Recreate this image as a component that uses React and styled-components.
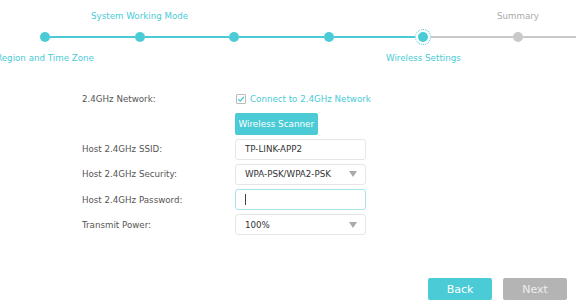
import React from 'react'
import styled, { createGlobalStyle } from 'styled-components'

const teal = '#4acbd6'
const grey = '#c9c9c9'

const Global = createGlobalStyle`
    html, body{
        margin: 0;
        padding: 0;
        background: #fff;
    }
    body{
        font-family: "DejaVu Sans", Verdana, sans-serif;
        font-size: 8.7px;
        color: #555;
    }
`

const Page = styled.div`
    width: 576px;
    height: 304px;
    overflow: hidden;
    background: #fff;
`

const Stepper = styled.div`
    padding-top: 9px;
    margin-left: -2.3px;
`

const StepRow = styled.div`
    display: grid;
    grid-template-columns: repeat(7, 94.6px);
    height: ${p => p.$h}px;
    align-items: center;
`

const StepLabel = styled.div`
    margin: 0 -33px;
    text-align: center;
    white-space: nowrap;
    font-size: 8.7px;
    color: ${p => p.$done ? teal : '#aaa'};
`

const Node = styled.div`
    display: flex;
    align-items: center;
`

const Line = styled.div`
    flex: 1;
    height: 2px;
    background: ${p => p.$hidden ? 'transparent' : p.$done ? teal : grey};
`

const Dot = styled.div`
    flex: none;
    width: 10px;
    height: 10px;
    border-radius: 50%;
    background: ${p => p.$done ? teal : grey};
    margin: ${p => p.$active ? '0 3px' : '0'};
    outline: ${p => p.$active ? `1px dotted ${teal}` : 'none'};
    outline-offset: 2px;
`

const Form = styled.div`
    margin: 24px 0 0 82px;
    display: grid;
    grid-template-columns: 153px 131px;
    grid-auto-rows: 21px;
    row-gap: 4.25px;
    align-items: center;
`

const Label = styled.div`
    color: #555;
    font-size: 8.7px;
`

const Check = styled.label`
    display: flex;
    align-items: center;
    gap: 4px;
    margin-left: 1px;
    color: ${teal};
    white-space: nowrap;
`

const Box = styled.span`
    width: 8px;
    height: 8px;
    border: 1px solid #bbb;
    border-radius: 1px;
    display: flex;
    align-items: center;
    justify-content: center;
`

const ScanButton = styled.button`
    justify-self: start;
    height: 22px;
    padding: 0 3.5px;
    border: none;
    border-radius: 2px;
    background: ${teal};
    color: #fff;
    font-family: inherit;
    font-size: 8.8px;
`

const Field = styled.div`
    height: 21px;
    box-sizing: border-box;
    border: 1px solid ${p => p.$focus ? '#a6e4ea' : '#e6e6e6'};
    border-radius: 3px;
    display: flex;
    align-items: center;
    padding: 0 9px;
    color: #333;
    font-size: 8.7px;
`

const Value = styled.span`
    flex: 1;
`

const Arrow = styled.span`
    width: 0;
    height: 0;
    border-left: 4px solid transparent;
    border-right: 4px solid transparent;
    border-top: 6px solid #aaa;
    margin-right: -1px;
`

const Caret = styled.span`
    width: 1px;
    height: 11px;
    background: #444;
`

const Footer = styled.div`
    display: flex;
    justify-content: flex-end;
    gap: 11px;
    margin-top: 43px;
    padding-right: 9px;
`

const NavButton = styled.button`
    width: 64px;
    height: 22px;
    border: none;
    border-radius: 2px;
    background: ${p => p.$primary ? teal : '#b4b4b4'};
    color: ${p => p.$primary ? '#fff' : '#eee'};
    font-family: inherit;
    font-size: 11px;
`

const steps = [
    { label: 'Region and Time Zone', pos: 'bottom' },
    { label: 'System Working Mode', pos: 'top' },
    { label: '', pos: 'bottom' },
    { label: '', pos: 'top' },
    { label: 'Wireless Settings', pos: 'bottom' },
    { label: 'Summary', pos: 'top' },
    { label: '', pos: 'bottom' },
]
const active = 4

function Stepbar() {
    return (
        <Stepper>
            <StepRow $h={14}>
                {steps.map((s, i) => (
                    <StepLabel key={i} $done={i <= active}>{s.pos === 'top' ? s.label : ''}</StepLabel>
                ))}
            </StepRow>
            <StepRow $h={28}>
                {steps.map((s, i) => (
                    <Node key={i}>
                        <Line $hidden={i === 0} $done={i <= active} />
                        <Dot $done={i <= active} $active={i === active} />
                        <Line $done={i < active} />
                    </Node>
                ))}
            </StepRow>
            <StepRow $h={13}>
                {steps.map((s, i) => (
                    <StepLabel key={i} $done={i <= active}>{s.pos === 'bottom' ? s.label : ''}</StepLabel>
                ))}
            </StepRow>
        </Stepper>
    )
}

export default function App() {
    return (
        <Page>
            <Global />
            <Stepbar />
            <Form>
                <Label>2.4GHz Network:</Label>
                <Check>
                    <Box>
                        <svg width="8" height="8" viewBox="0 0 8 8">
                            <path d="M1.2 4.2 L3.2 6 L6.8 1.8" fill="none" stroke={teal} strokeWidth="1.3" />
                        </svg>
                    </Box>
                    Connect to 2.4GHz Network
                </Check>
                <div />
                <ScanButton>Wireless Scanner</ScanButton>
                <Label>Host 2.4GHz SSID:</Label>
                <Field><Value>TP-LINK-APP2</Value></Field>
                <Label>Host 2.4GHz Security:</Label>
                <Field><Value>WPA-PSK/WPA2-PSK</Value><Arrow /></Field>
                <Label>Host 2.4GHz Password:</Label>
                <Field $focus><Caret /></Field>
                <Label>Transmit Power:</Label>
                <Field><Value>100%</Value><Arrow /></Field>
            </Form>
            <Footer>
                <NavButton $primary>Back</NavButton>
                <NavButton>Next</NavButton>
            </Footer>
        </Page>
    )
}
